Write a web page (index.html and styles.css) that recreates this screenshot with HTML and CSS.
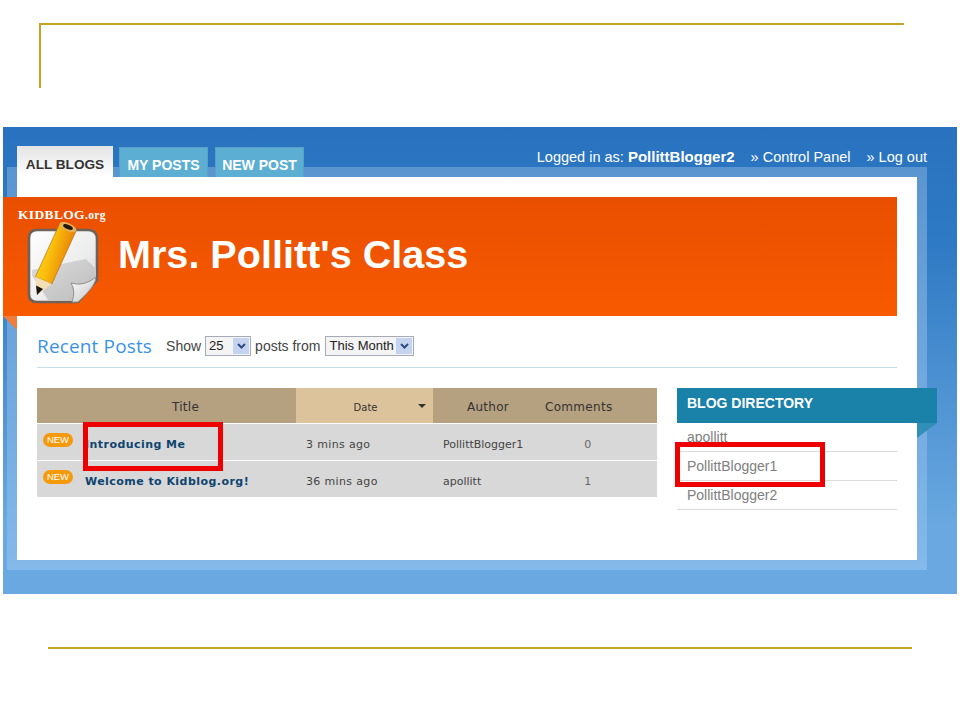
FILE: index.html
```html
<!DOCTYPE html>
<html lang="en">
<head>
<meta charset="utf-8">
<title>Mrs. Pollitt's Class</title>
<link rel="stylesheet" href="styles.css">
</head>
<body>
<div class="slide">
  <div class="corner-rule"></div>
  <div class="panel">
    <div class="topbar">
      <nav class="tabs">
        <a class="tab tab-active">ALL BLOGS</a>
        <a class="tab">MY POSTS</a>
        <a class="tab">NEW POST</a>
      </nav>
      <div class="userbar">
        <span>Logged in as: <b>PollittBlogger2</b></span>
        <span>» Control Panel</span>
        <span>» Log out</span>
      </div>
    </div>
    <div class="band">
      <div class="sheet">
        <header class="banner">
          <div class="brand">
            <div class="brand-name">KIDBLOG<small>.org</small></div>
            <svg class="logo" width="78" height="84" viewBox="0 0 78 84">
              <defs>
                <linearGradient id="paper" x1="0" y1="0" x2="1" y2="1">
                  <stop offset="0" stop-color="#ffffff"/>
                  <stop offset="0.6" stop-color="#ececec"/>
                  <stop offset="1" stop-color="#d0d0d0"/>
                </linearGradient>
                <linearGradient id="pencil" x1="0" y1="0" x2="1" y2="0.4">
                  <stop offset="0" stop-color="#ffe81e"/>
                  <stop offset="0.5" stop-color="#f9bd0c"/>
                  <stop offset="1" stop-color="#e57705"/>
                </linearGradient>
                <linearGradient id="curl" x1="0" y1="0" x2="1" y2="1">
                  <stop offset="0" stop-color="#ffffff"/>
                  <stop offset="1" stop-color="#c4c4c4"/>
                </linearGradient>
                <linearGradient id="band" x1="0" y1="0" x2="1" y2="1">
                  <stop offset="0" stop-color="#dcdcdc"/>
                  <stop offset="1" stop-color="#bcbcbc"/>
                </linearGradient>
              </defs>
              <path d="M13 8H64Q73 8 73 17V58L54 80H13Q5 80 5 72V16Q5 8 13 8Z" fill="#3d3028" opacity=".45" transform="translate(-1 1)"/>
              <path d="M13 8H64Q73 8 73 17V58L54 80H13Q5 80 5 72V16Q5 8 13 8Z" fill="url(#paper)" stroke="#6e625a" stroke-width="2.6"/>
              <path d="M8 48L62 37L72 47V58L54 78H24Q14 62 8 54Z" fill="url(#band)"/>
              <path d="M48 80Q52 69 47 61Q60 65 72 55Q72 64 54 80Z" fill="url(#curl)" stroke="#8f8f8f" stroke-width="1"/>
              <path d="M35.8 1.3L52.2 8.7L27.8 62.1L11.4 54.7Z" fill="url(#pencil)" stroke="#a8650a" stroke-width=".6"/>
              <path d="M11.4 54.7L27.8 62.1L13 73Z" fill="#f3dfb6"/>
              <path d="M12 63.6L19 67L13 73Z" fill="#1a120e"/>
              <ellipse cx="44" cy="5" rx="9" ry="3.8" fill="#e2b25e" transform="rotate(24 44 5)"/>
              <ellipse cx="44" cy="5" rx="5.2" ry="2.1" fill="#241810" transform="rotate(24 44 5)"/>
            </svg>
          </div>
          <h1 class="banner-title">Mrs. Pollitt's Class</h1>
        </header>
        <div class="banner-fold"></div>

        <div class="filter-row">
          <h2 class="section-title">Recent Posts</h2>
          <span>Show</span>
          <span class="select select-count"><span class="select-value">25</span><span class="select-arrow"><svg width="9" height="6" viewBox="0 0 9 6"><path d="M1 1L4.5 4.5L8 1" fill="none" stroke="#2f4a80" stroke-width="2"/></svg></span></span>
          <span>posts from</span>
          <span class="select select-range"><span class="select-value">This Month</span><span class="select-arrow"><svg width="9" height="6" viewBox="0 0 9 6"><path d="M1 1L4.5 4.5L8 1" fill="none" stroke="#2f4a80" stroke-width="2"/></svg></span></span>
        </div>

        <div class="columns">
          <section class="posts">
            <div class="row head">
              <div class="head-title">Title</div>
              <div class="head-date"><span>Date</span><i class="sort-arrow"></i></div>
              <div class="head-author">Author</div>
              <div class="head-comments">Comments</div>
            </div>
            <div class="row post">
              <div class="post-title"><span class="new">NEW</span><a>Introducing Me</a></div>
              <div class="cell-date">3 mins ago</div>
              <div class="cell-author">PollittBlogger1</div>
              <div class="cell-count">0</div>
            </div>
            <div class="row post">
              <div class="post-title"><span class="new">NEW</span><a>Welcome to Kidblog.org!</a></div>
              <div class="cell-date">36 mins ago</div>
              <div class="cell-author">apollitt</div>
              <div class="cell-count">1</div>
            </div>
          </section>
          <aside class="directory">
            <h3 class="directory-title">BLOG DIRECTORY</h3>
            <div class="directory-fold"></div>
            <ul class="directory-list">
              <li>apollitt</li>
              <li>PollittBlogger1</li>
              <li>PollittBlogger2</li>
            </ul>
          </aside>
        </div>
      </div>
    </div>
  </div>
  <div class="bottom-rule"></div>
  <div class="callout callout-post"></div>
  <div class="callout callout-blogger"></div>
</div>
</body>
</html>
```
FILE: styles.css
```css
* { box-sizing: border-box; }
html, body { margin: 0; padding: 0; background: #fff; }
body { font-family: "Liberation Sans", Arial, sans-serif; }

.slide { position: relative; width: 960px; height: 720px; overflow: hidden; padding-top: 23px; }
.corner-rule { width: 865px; height: 65px; margin-left: 39px; border-top: 2px solid #c6a41e; border-left: 2px solid #c6a41e; }
.bottom-rule { width: 864px; height: 2px; margin: 53px 0 0 48px; background: #c6a41e; }

.panel { width: 954px; height: 467px; margin: 39px 0 0 3px; padding-top: 19px; background: linear-gradient(#2872bf 0%, #2f7ac4 25%, #69a8e0 85%, #69a8e0 100%); }
.topbar { position: relative; z-index: 2; display: flex; justify-content: space-between; height: 31px; padding: 0 30px 0 14px; }
.tabs { display: flex; align-items: flex-end; gap: 7px; }
.tab { display: block; width: 89px; height: 30px; line-height: 34px; text-align: center; font-size: 14px; font-weight: bold; color: #fff; background: #5cafd3; border: 1px solid #5aa0c4; border-bottom: 0; white-space: nowrap; }
.tab-active { width: 96px; height: 31px; margin-right: -1px; line-height: 37px; font-size: 13.6px; color: #333; background: linear-gradient(#e4e4e4, #fff); border: 0; }
.userbar { display: flex; gap: 16px; font-size: 14.5px; line-height: 22px; color: #fff; white-space: nowrap; }
.userbar b { font-weight: bold; font-size: 15px; }

.band { width: 920px; height: 403px; margin: -10px 0 0 4px; padding: 10px; background: linear-gradient(#5b95d0, #85b9ea); }
.sheet { position: relative; width: 900px; height: 383px; padding: 20px 20px 0; background: #fff; }

.banner { display: flex; align-items: center; width: 894px; height: 119px; margin-left: -34px; background: linear-gradient(#e94f00, #f85a00); }
.brand { width: 115px; flex: none; padding: 11px 0 0 15px; align-self: flex-start; }
.brand-name { font-family: "Liberation Serif", serif; font-weight: bold; font-size: 13.5px; line-height: 14px; color: #fff; letter-spacing: .35px; white-space: nowrap; }
.brand-name small { font-size: 11.5px; }
.logo { display: block; margin: 0 0 0 6px; }
.banner-title { margin: 0 0 5px; font-size: 39.6px; line-height: 44px; font-weight: bold; color: #fff; white-space: nowrap; }
.banner-fold { position: absolute; left: -14px; top: 139px; width: 0; height: 0; border-top: 14px solid #f07c3c; border-left: 14px solid transparent; }

.filter-row { display: flex; align-items: center; gap: 4px; height: 52px; margin-bottom: 20px; border-bottom: 1px solid #c8dbe8; padding-top: 8px; font-size: 14px; color: #444; white-space: nowrap; }
.section-title { margin: 0 10px 0 0; font-family: "Open Sans", sans-serif; font-size: 19px; font-weight: 400; color: #3b93e6; letter-spacing: .15px; }
.select { display: flex; align-items: stretch; height: 20px; border: 1px solid #a5acb5; background: #f4f4f4; color: #222; font-size: 13px; }
.select-count { width: 46px; }
.select-range { width: 89px; margin-left: 1px; }
.select-value { flex: 1; padding-left: 3px; line-height: 18px; }
.select-arrow { display: flex; align-items: center; justify-content: center; flex: none; width: 16px; margin: 1px; background: #c4d3f0; }

.columns { display: flex; gap: 20px; }
.posts { width: 620px; flex: none; }
.row { display: grid; grid-template-columns: 259px 137px 110px 114px; }
.head { height: 35px; background: #b5a07f; font-family: "DejaVu Sans", sans-serif; font-size: 12px; letter-spacing: .3px; color: #333; align-items: center; }
.head-title { padding: 3px 0 0 38px; text-align: center; }
.head-date { position: relative; align-self: stretch; background: #dcc39c; display: flex; align-items: center; justify-content: center; padding-top: 4px; font-size: 10px; letter-spacing: 0; }
.head-date span { transform: translateX(1px); }
.sort-arrow { position: absolute; right: 7px; top: 16px; width: 0; height: 0; border: 4px solid transparent; border-top: 4px solid #333; border-bottom: 0; }
.head-author { padding-top: 3px; text-align: center; }
.head-comments { padding: 3px 0 0 2px; }
.post { height: 36px; margin-top: 1px; padding-top: 4px; background: #d8d8d8; font-family: "DejaVu Sans", sans-serif; font-size: 11px; color: #444; align-items: center; letter-spacing: .35px; }
.post-title { display: flex; align-items: center; padding-left: 6px; }
.post-title a { font-weight: bold; color: #0e4470; margin-left: 12px; letter-spacing: .45px; white-space: nowrap; }
.new { width: 30px; height: 14px; flex: none; margin-top: -8px; border-radius: 7px; background: #f59a0c; color: #fff; font-family: "Liberation Sans", sans-serif; font-size: 9.5px; font-weight: normal; line-height: 14px; text-align: center; letter-spacing: 0; }
.cell-date { padding-left: 10px; }
.cell-author { padding-left: 10px; letter-spacing: 0; }
.cell-count { padding-right: 24px; text-align: center; color: #666; }

.directory { position: relative; width: 220px; flex: none; }
.directory-title { width: 260px; height: 35px; margin: 0; padding: 7px 10px 0; font-size: 14px; line-height: 16px; font-weight: bold; color: #fff; background: #1a81a8; }
.directory-fold { position: absolute; left: 240px; top: 35px; width: 0; height: 0; border-top: 15px solid #3290b8; border-right: 20px solid transparent; }
.directory-list { margin: 0; padding: 0; list-style: none; font-size: 14px; color: #808080; }
.directory-list li { height: 29px; padding-left: 10px; line-height: 28px; border-bottom: 1px solid #dcdcdc; }

.callout { position: absolute; border: 5px solid #ee0000; }
.callout-post { left: 83px; top: 422px; width: 140px; height: 49px; }
.callout-blogger { left: 675px; top: 442px; width: 150px; height: 45px; }
```
